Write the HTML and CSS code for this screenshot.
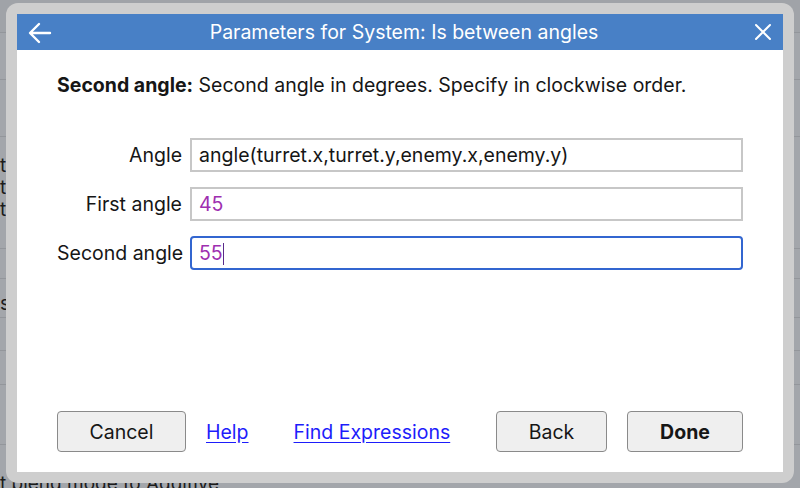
FILE: index.html
```html
<!DOCTYPE html>
<html lang="en">
<head>
    <meta charset="UTF-8">
    <meta name="viewport" content="width=device-width, initial-scale=1.0">
    <title>Parameters for System</title>
    <link rel="stylesheet" href="styles.css">
</head>
<body>
    <!-- editor behind the dialog -->
    <div class="backdrop">
        <div class="row r1"></div>
        <div class="row r2"></div>
        <div class="row r3"></div>
        <div class="row r4">
            <div class="frag">t</div>
            <div class="frag">t</div>
            <div class="frag">t</div>
        </div>
        <div class="row r5"></div>
        <div class="row r6"><div class="frag">s</div></div>
        <div class="row r7"></div>
        <div class="row r8"></div>
        <div class="row r9"></div>
        <div class="row r10"><div class="frag">t blend mode to Additive</div></div>
    </div>

    <div class="dialog">
        <div class="panel">
            <div class="header">
                <svg class="back" width="24" height="22" viewBox="0 0 24 22">
                    <path d="M22 11H3M11 2L2 11l9 9" fill="none" stroke="#fff" stroke-width="2.4" stroke-linecap="round" stroke-linejoin="round"/>
                </svg>
                <div class="title">Parameters for System: Is between angles</div>
                <svg class="close" width="18" height="18" viewBox="0 0 18 18">
                    <path d="M2 2l14 14M16 2L2 16" fill="none" stroke="#fff" stroke-width="2" stroke-linecap="round"/>
                </svg>
            </div>

            <div class="body">
                <p class="desc"><b>Second angle:</b> Second angle in degrees. Specify in clockwise order.</p>

                <div class="form">
                    <label>Angle</label>
                    <div class="field">angle(turret.x,turret.y,enemy.x,enemy.y)</div>
                    <label>First angle</label>
                    <div class="field num">45</div>
                    <label>Second angle</label>
                    <div class="field num focus">55<span class="caret"></span></div>
                </div>
            </div>

            <div class="footer">
                <button>Cancel</button>
                <a href="#" class="help">Help</a>
                <a href="#" class="find">Find Expressions</a>
                <div class="spacer"></div>
                <button>Back</button>
                <button class="done">Done</button>
            </div>
        </div>
    </div>
</body>
</html>
```

FILE: styles.css
```css
body {
    margin: 0;
    width: 800px;
    height: 488px;
    overflow: hidden;
    position: relative;
    background-color: #a3a6ab;
    font-family: Inter, "Open Sans", sans-serif;
    color: #161616;
}

/* background editor */
.backdrop {
    display: flex;
    flex-direction: column;
}

.row {
    border-bottom: 1px solid #93969b;
    font-size: 19px;
    color: #1c1c1c;
    padding-left: 0;
}

.r1 { height: 32px; background-color: #a0a3a8; }
.r2 { height: 46px; }
.r3 { height: 56px; }
.r4 { height: 112px; padding-top: 18px; box-sizing: border-box; }
.r5 { height: 29px; }
.r6 { height: 39px; padding-top: 14px; box-sizing: border-box; }
.r7 { height: 32px; }
.r8 { height: 33px; }
.r9 { height: 59px; }
.r10 { height: 60px; padding-top: 28px; box-sizing: border-box; }

.frag {
    line-height: 22px;
}

/* dialog */
.dialog {
    position: absolute;
    left: 6px;
    top: 3px;
    width: 788px;
    height: 480px;
    box-sizing: border-box;
    padding: 11px;
    background-color: #cecece;
    border-radius: 12px;
}

.panel {
    height: 100%;
    background-color: #fff;
    display: flex;
    flex-direction: column;
}

.header {
    height: 36px;
    background-color: #4880c6;
    display: flex;
    align-items: center;
    padding: 0 11px;
    color: #fff;
}

.back {
    margin-top: 1px;
}

.title {
    flex: 1;
    text-align: center;
    font-size: 19.5px;
    margin-left: 2px;
}

.body {
    flex: 1;
    padding: 0 40px;
}

.desc {
    margin: 23px 0 0;
    font-size: 19.5px;
    line-height: 24px;
}

.desc b {
    font-weight: 700;
}

.form {
    margin-top: 41px;
    display: grid;
    grid-template-columns: 125px 1fr;
    column-gap: 8px;
    row-gap: 15px;
    align-items: center;
}

.form label {
    text-align: right;
    font-size: 19.5px;
    white-space: nowrap;
}

.field {
    height: 34px;
    box-sizing: border-box;
    border: 2px solid #c7c7c7;
    padding: 0 7px;
    font-size: 19.5px;
    line-height: 30px;
    white-space: nowrap;
}

.num {
    color: #9e2fb0;
}

.field.focus {
    border-color: #3366d0;
    border-radius: 4px;
}

.caret {
    display: inline-block;
    width: 1px;
    height: 22px;
    background-color: #5a2a8a;
    vertical-align: -5px;
}

.footer {
    display: flex;
    align-items: center;
    padding: 0 40px 20px;
}

button {
    height: 41px;
    font-family: inherit;
    font-size: 19.5px;
    color: #161616;
    background-color: #efefef;
    border: 1px solid #8a8a8a;
    border-radius: 4px;
    padding: 0;
    width: 129px;
}

.footer a {
    font-size: 19.5px;
    color: #1d1dfb;
    text-decoration: underline;
    text-underline-offset: 3px;
}

.help {
    margin-left: 20px;
}

.find {
    margin-left: 45px;
}

.spacer {
    flex: 1;
}

.footer button + button {
    margin-left: 20px;
}

.footer button:nth-last-child(2) {
    width: 111px;
}

.done {
    width: 116px;
    font-weight: 700;
}
```
